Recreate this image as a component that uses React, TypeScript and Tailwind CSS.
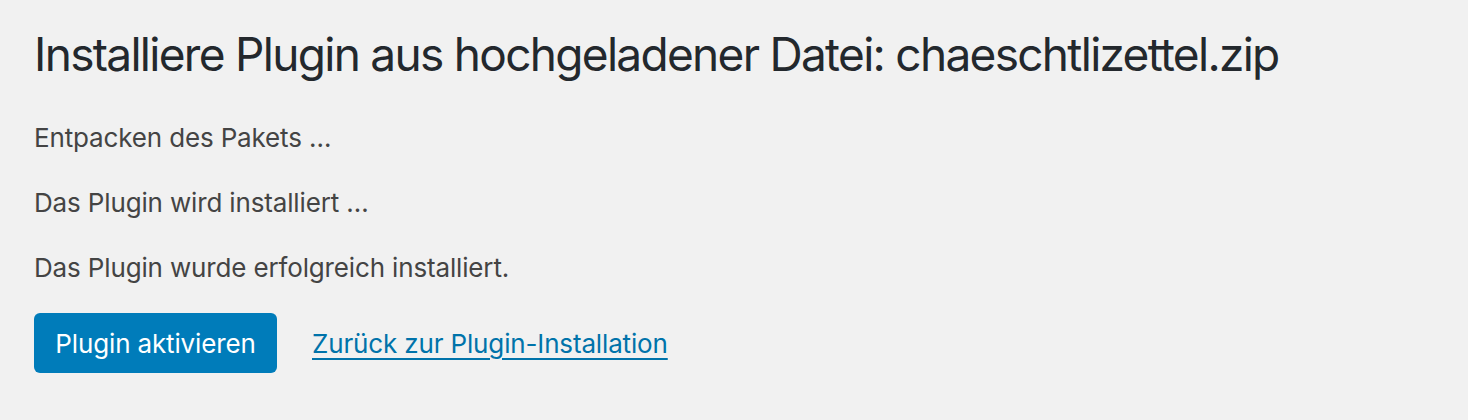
export default function App() {
  return (
    <main
      className="min-h-screen w-full bg-[#f1f1f1] px-[34px] pt-[6px]"
      style={{ fontFamily: "Inter, 'Noto Sans', sans-serif" }}
    >
      {/* heading */}
      <h1 className="pt-[18px] pb-[8px] text-[46px] leading-[60px] font-normal tracking-[-1.7px] text-[#23282d]">
        Installiere Plugin aus hochgeladener Datei: chaeschtlizettel.zip
      </h1>

      {/* status lines */}
      <p className="my-[26px] text-[26px] leading-[39px] tracking-[-0.15px] text-[#444]">Entpacken des Pakets …</p>
      <p className="my-[26px] text-[26px] leading-[39px] tracking-[-0.15px] text-[#444]">Das Plugin wird installiert …</p>
      <p className="my-[26px] text-[26px] leading-[39px] tracking-[-0.15px] text-[#444]">Das Plugin wurde erfolgreich installiert.</p>

      {/* actions */}
      <div className="flex items-center gap-[35px]">
        <a
          href="#"
          className="flex h-[60px] w-[243px] items-center justify-center rounded-[6px] bg-[#007cba] text-[26px] tracking-[-0.15px] text-white"
        >
          Plugin aktivieren
        </a>
        <a href="#" className="text-[26px] leading-[39px] tracking-[-0.15px] text-[#0073aa] underline underline-offset-[5px]">
          Zurück zur Plugin-Installation
        </a>
      </div>
    </main>
  );
}
